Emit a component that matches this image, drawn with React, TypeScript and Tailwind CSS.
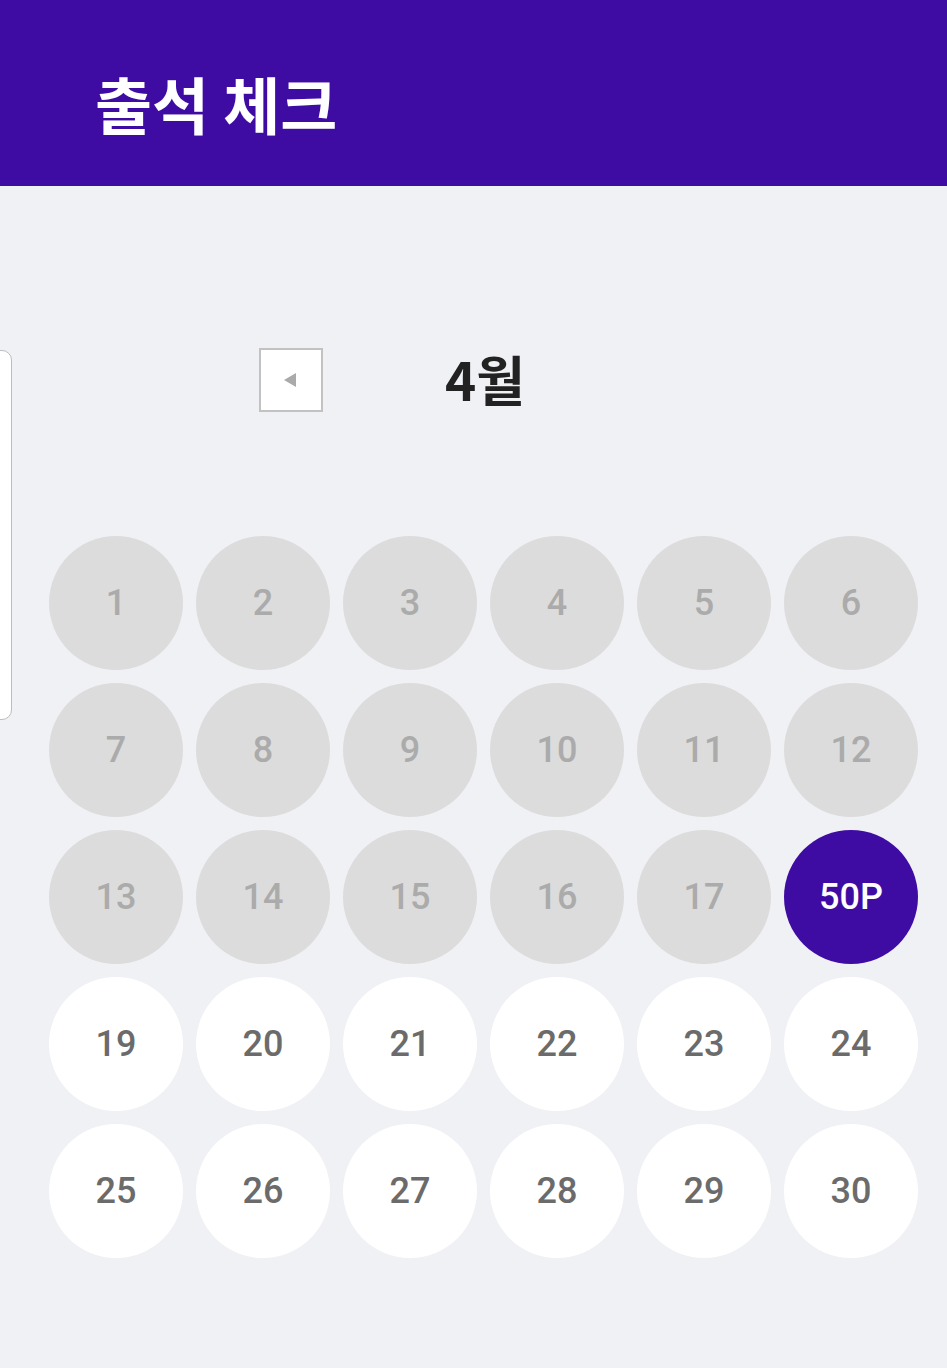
import React from 'react'

const days = Array.from({ length: 30 }, (_, i) => i + 1)
const today = 18

const DayCircle = ({ day }: { day: number }) => {
  if (day === today) {
    return (
      <div className="w-[134px] h-[134px] rounded-full bg-[#3f0ca3] flex items-center justify-center">
        <span className="text-white text-[36px] font-medium">50P</span>
      </div>
    )
  }
  const past = day < today
  return (
    <div
      className={`w-[134px] h-[134px] rounded-full flex items-center justify-center ${
        past ? 'bg-[#dcdcdc]' : 'bg-white'
      }`}
    >
      <span className={`text-[36px] font-medium ${past ? 'text-[#ababab]' : 'text-[#6b6b6b]'}`}>{day}</span>
    </div>
  )
}

export default function App() {
  return (
    <div
      className="min-h-screen bg-[#f0f1f5]"
      style={{ fontFamily: 'Roboto, "Noto Sans CJK KR", sans-serif' }}
    >
      {/* 상단 헤더 */}
      <header className="h-[186px] bg-[#3f0ca3] pl-[95px] pt-[72px]">
        <h1
          className="text-white text-[62px] font-bold leading-none"
          style={{ fontFamily: '"Noto Sans CJK KR", sans-serif' }}
        >
          출석 체크
        </h1>
      </header>

      <main className="relative">
        {/* 이전 카드 일부 */}
        <div className="absolute left-[-20px] top-[164px] w-[32px] h-[370px] rounded-[10px] border border-[#bdbdbd] bg-white" />

        {/* 월 선택 */}
        <div className="pt-[162px] pl-[259px] flex items-center gap-[122px]">
          <button className="w-[64px] h-[64px] bg-white border-2 border-[#c2c2c2] flex items-center justify-center">
            <span className="block w-0 h-0 border-y-[7px] border-y-transparent border-r-[12px] border-r-[#aaaaaa] mr-[2px]" />
          </button>
          <div
            className="text-[53px] font-bold text-[#222222] leading-none -mt-[4px]"
            style={{ fontFamily: '"Noto Sans CJK KR", sans-serif' }}
          >
            4월
          </div>
        </div>

        {/* 날짜 그리드 */}
        <div className="mt-[124px] pl-[49px] grid grid-cols-[repeat(6,134px)] gap-[13px]">
          {days.map((d) => (
            <DayCircle key={d} day={d} />
          ))}
        </div>
      </main>
    </div>
  )
}
